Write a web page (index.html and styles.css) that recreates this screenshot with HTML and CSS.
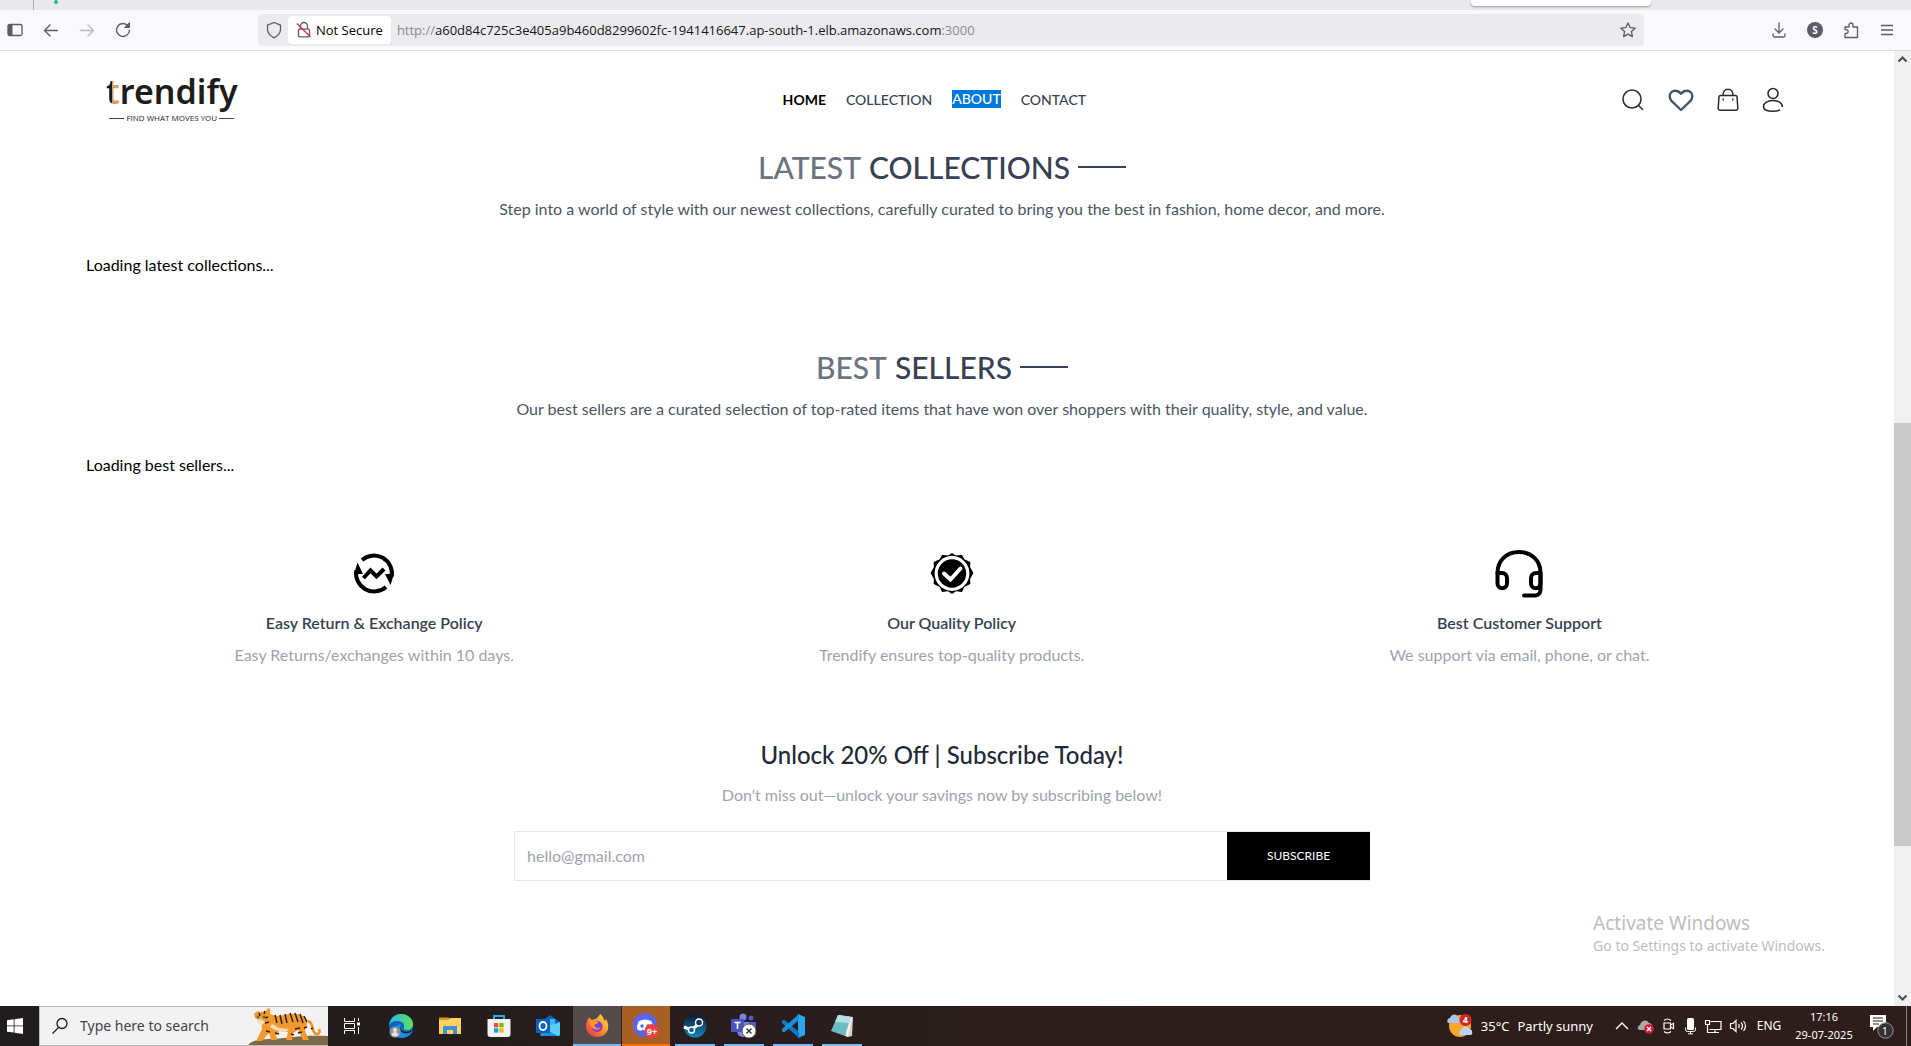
FILE: index.html
```html
<!DOCTYPE html>
<html lang="en">
<head>
<meta charset="utf-8">
<meta name="viewport" content="width=device-width, initial-scale=1">
<title>Trendify</title>
<link rel="stylesheet" href="styles.css">
</head>
<body>
<div class="tab-strip">
  <span class="tab-separator"></span>
  <svg class="tab-favicon" width="6" height="4" viewBox="0 0 6 4" aria-hidden="true"><path d="M2 0h2v1h1v2H4v1H2V3H1V1h1z" fill="#1abc9c"/></svg>
  <span class="tab-tooltip"></span>
</div>

<div class="toolbar">
  <div class="toolbar-nav">
    <button class="tool-button" aria-label="Sidebar"><svg width="18" height="18" viewBox="0 0 18 18"><rect x="2" y="3.5" width="14" height="11" rx="1.5" fill="none" stroke="#5b5b66" stroke-width="1.3"/><path d="M2 3.5h4.5v11H2z" fill="#5b5b66"/></svg></button>
    <button class="tool-button" aria-label="Back"><svg width="18" height="18" viewBox="0 0 18 18" fill="none" stroke="#5b5b66" stroke-width="1.4" stroke-linecap="round" stroke-linejoin="round"><path d="M15.500 9.500H3M8 4 2.500 9.500 8 15"/></svg></button>
    <button class="tool-button" aria-label="Forward"><svg width="18" height="18" viewBox="0 0 18 18" fill="none" stroke="#bcbcc2" stroke-width="1.4" stroke-linecap="round" stroke-linejoin="round"><path d="M2.500 9.500H15M10 4l5.500 5.500L10 15"/></svg></button>
    <button class="tool-button" aria-label="Reload"><svg width="18" height="18" viewBox="0 0 18 18" fill="none" stroke="#5b5b66" stroke-width="1.4" stroke-linecap="round"><path d="M14 4.800A6.500 6.500 0 1 0 15.500 9.200"/><path d="M15.500 2v4.500H11z" fill="#5b5b66" stroke-width="1" stroke-linejoin="round"/></svg></button>
  </div>
  <div class="url-bar">
    <svg class="shield" width="16" height="18" viewBox="0 0 16 18" fill="none" stroke="#5b5b66" stroke-width="1.3" stroke-linejoin="round"><path d="M8 1.500 14.500 4.200V8.500c0 4-3 6.500-6.500 8.300C4.500 15 1.500 12.500 1.500 8.500V4.200z"/></svg>
    <button class="security-chip">
      <svg width="16" height="18" viewBox="0 0 16 18" fill="none"><path d="M4.500 8V5a3.500 3.500 0 0 1 7 0v3M3.500 8.200h9a1 1 0 0 1 1 1v5.600a1 1 0 0 1-1 1h-9a1 1 0 0 1-1-1V9.200a1 1 0 0 1 1-1z" stroke="#5b5b66" stroke-width="1.300"/><path d="M1 2.500 14.500 16" stroke="#e22850" stroke-width="1.300"/></svg>
      <span>Not Secure</span>
    </button>
    <div class="url">http://<span class="url-host">a60d84c725c3e405a9b460d8299602fc-1941416647.ap-south-1.elb.amazonaws.com</span>:3000</div>
    <svg class="star" width="18" height="18" viewBox="0 0 18 18" fill="none" stroke="#5b5b66" stroke-width="1.3" stroke-linejoin="round"><path d="m9 2 2.100 4.600 5 .6-3.700 3.400 1 5L9 13.100l-4.400 2.500 1-5L1.900 7.200l5-.6z"/></svg>
  </div>
  <div class="toolbar-actions">
    <button class="tool-button" aria-label="Downloads"><svg width="18" height="18" viewBox="0 0 18 18" fill="none" stroke="#5b5b66" stroke-width="1.3" stroke-linecap="round" stroke-linejoin="round"><path d="M9 2v9.500M5 8l4 4 4-4M3 13v1.500A1.500 1.500 0 0 0 4.500 16h9a1.500 1.500 0 0 0 1.500-1.500V13"/></svg></button>
    <button class="tool-button" aria-label="Account"><span class="avatar">S</span></button>
    <button class="tool-button" aria-label="Extensions"><svg width="18" height="18" viewBox="0 0 18 18" fill="none" stroke="#5b5b66" stroke-width="1.3" stroke-linejoin="round"><path d="M3 16.500v-4h1.200a1.800 1.800 0 0 0 0-3.800H3V6h4V4a2 2 0 0 1 4 0v2h4.500v10.500z"/></svg></button>
    <button class="tool-button" aria-label="Menu"><svg width="18" height="18" viewBox="0 0 18 18" stroke="#5b5b66" stroke-width="1.300"><path d="M3 4.500h12M3 9h12M3 13.500h12"/></svg></button>
  </div>
</div>

<div class="viewport">
  <div class="page">
    <header class="site-header">
      <a class="logo" href="#">
        <span class="logo-name"><span class="logo-t">t</span>rendify</span>
        <span class="logo-tag">FIND WHAT MOVES YOU</span>
      </a>
      <nav class="site-nav">
        <a class="active" href="#">HOME</a>
        <a href="#">COLLECTION</a>
        <a href="#"><mark>ABOUT</mark></a>
        <a href="#">CONTACT</a>
      </nav>
      <div class="site-actions">
        <button aria-label="Search"><svg width="24" height="26" viewBox="0 0 24 26" fill="none" stroke="#2b2b2b" stroke-width="1.500"><circle cx="11" cy="12" r="9"/><path d="m17.300 18.300 4.700 4.700"/></svg></button>
        <button aria-label="Wishlist"><svg width="26" height="26" viewBox="0 0 26 26" fill="none" stroke="#475569" stroke-width="2.400" stroke-linejoin="round"><path d="M13 23 3.500 13.800A6 6 0 0 1 1.700 9.500C1.700 6 4 3.700 7.200 3.700c2.500 0 4.300 1 5.800 3 1.500-2 3.300-3 5.800-3 3.200 0 5.500 2.300 5.500 5.800a6 6 0 0 1-1.800 4.300z"/></svg></button>
        <button aria-label="Cart"><svg width="22" height="26" viewBox="0 0 22 26" fill="none" stroke="#2b2b2b" stroke-width="1.500"><path d="M3.500 8.500h15a1.500 1.500 0 0 1 1.500 1.300l.8 11.200a2 2 0 0 1-2 2.300H3.200a2 2 0 0 1-2-2.300L2 9.800a1.500 1.500 0 0 1 1.500-1.300z"/><path d="M6 8.500C6 5 8 2.200 11 2.200s5 2.800 5 6.300"/><path d="M5.500 12.500h1.500M15 12.500h1.500" stroke-width="1.800"/></svg></button>
        <button aria-label="Profile"><svg width="22" height="26" viewBox="0 0 22 26" fill="none" stroke="#2b2b2b" stroke-width="1.600" stroke-linecap="round"><circle cx="11" cy="6.500" r="5"/><path d="M20.300 19.500c0-3.500-4-6-9.300-6s-9.500 2.500-9.500 6c0 3 4 4.700 9.500 4.700 2.700 0 5-.4 6.500-1.100"/></svg></button>
      </div>
    </header>

    <main>
      <section class="shelf">
        <h2 class="section-title"><span>LATEST</span> COLLECTIONS</h2>
        <p class="section-text">Step into a world of style with our newest collections, carefully curated to bring you the best in fashion, home decor, and more.</p>
        <p class="loading">Loading latest collections...</p>
      </section>
      <section class="shelf">
        <h2 class="section-title"><span>BEST</span> SELLERS</h2>
        <p class="section-text">Our best sellers are a curated selection of top-rated items that have won over shoppers with their quality, style, and value.</p>
        <p class="loading">Loading best sellers...</p>
      </section>

      <section class="policies">
        <article class="policy">
          <svg width="50" height="50" viewBox="0 0 50 50" fill="none" stroke="#000" stroke-width="4"><path d="M13 11.100A18 18 0 0 1 42.700 27.600M37 37.900A18 18 0 0 1 7.300 21.400"/><path d="m14.500 29 7-7.500 6 6 7.500-7.500"/><path d="M8.500 13.500 14 25H5zM41.500 36 36 25h9z" fill="#000" stroke="none"/></svg>
          <h3>Easy Return &amp; Exchange Policy</h3>
          <p>Easy Returns/exchanges within 10 days.</p>
        </article>
        <article class="policy">
          <svg width="50" height="50" viewBox="0 0 50 50"><path d="M25 4l4 2.500 6-.8 2.300 4.500 6 2.800-.2 5 3.400 6-3.400 6 .2 5-6 3-2.300 5-6-.7-4 2.700-4-2.700-6 .7-2.300-5-6-3 .2-5L3.500 24l3.400-6-.2-5 6-2.800L15 5.700l6 .8z" fill="#000"/><circle cx="25" cy="24.500" r="15.800" fill="none" stroke="#fff" stroke-width="3.200"/><path d="m17 24.500 6.500 6 10-11" fill="none" stroke="#fff" stroke-width="4" stroke-linecap="round"/></svg>
          <h3>Our Quality Policy</h3>
          <p>Trendify ensures top-quality products.</p>
        </article>
        <article class="policy">
          <svg width="50" height="50" viewBox="0 0 50 50" fill="none" stroke="#000" stroke-width="4" stroke-linecap="round" stroke-linejoin="round"><path d="M3.500 24C3.500 11 13 3 25 3s21.500 8 21.500 21v17a5.500 5.500 0 0 1-5.500 5.500H30"/><path d="M3.500 24H8a5 5 0 0 1 5 5v5.500a4.700 4.700 0 0 1-9.500 0zM46.500 24H42a5 5 0 0 0-5 5v5.500a4.700 4.700 0 0 0 9.500 0z"/></svg>
          <h3>Best Customer Support</h3>
          <p>We support via email, phone, or chat.</p>
        </article>
      </section>

      <section class="newsletter">
        <h2>Unlock 20% Off | Subscribe Today!</h2>
        <p>Don't miss out—unlock your savings now by subscribing below!</p>
        <form class="signup">
          <input type="email" aria-label="Email address" placeholder="hello@gmail.com">
          <button type="submit">SUBSCRIBE</button>
        </form>
      </section>
    </main>
    <div class="watermark"><strong>Activate Windows</strong><span>Go to Settings to activate Windows.</span></div>
  </div>
  <div class="scrollbar" aria-hidden="true">
    <svg width="17" height="17" viewBox="0 0 17 17" fill="none" stroke="#505050" stroke-width="2.200"><path d="m4.500 10.500 4-4 4 4"/></svg>
    <div class="scroll-track"><div class="scroll-thumb"></div></div>
    <svg width="17" height="17" viewBox="0 0 17 17" fill="none" stroke="#505050" stroke-width="2.200"><path d="m4.500 6.500 4 4 4-4"/></svg>
  </div>
</div>

<footer class="taskbar">
  <button class="start" aria-label="Start"><svg width="16" height="16" viewBox="0 0 16 16" fill="#fff"><path d="M0 2.300 6.700 1.300v6.200H0zM7.500 1.200 16 0v7.500H7.500zM0 8.300h6.700v6.300L0 13.700zM7.500 8.300H16V16l-8.500-1.200z"/></svg></button>
  <label class="search">
    <svg class="search-glass" width="18" height="18" viewBox="0 0 18 18" fill="none" stroke="#1b1b1b" stroke-width="1.300"><circle cx="11" cy="6.500" r="5"/><path d="M7.500 10.500 1.500 16.500"/></svg>
    <input type="text" aria-label="Search" placeholder="Type here to search">
    <svg class="tiger" width="80" height="38" viewBox="0 0 80 38">
      <path d="M0 38c4-5 12-6 26-6 16-1 26-4 54-3v9z" fill="#7a6847"/>
      <path d="M60 14c5 1 4 8 6 11 2 4 7 2 5-3" fill="none" stroke="#ef9227" stroke-width="2.600"/>
      <path d="M8 5l3-1 1 1 6-1 2-3 2 1v5c6 3 12 2 18 0 9-1 15 0 18 5 3 5-1 9-1 12l4 9h-6l-5-10-5 3-1 7h-6l2-8-9-1-3 4 1 5h-6l-2-7-7 8h-6l6-12-1-8-6-3-1-4z" fill="#f39a2e"/>
      <path d="M24 17l7 4 10 1-3 3-11-2-5-3zM9 13l4-1 4 3-3 3-4-1z" fill="#f7ddba"/>
      <path d="m27 8 2 8m3-8 2 9m3-10 2 9m3-10 3 9m2-9 3 9m2-8 3 9m1-7 3 6M17 4l-1 3m-5-1 1 3m8 1-3 1m4 4-4 1m1 8 4 1m5 1 4 1m16-5 5-1m-2 5 4-1m-11 2 3 1m10-7 3-1m4 2 2-1" fill="none" stroke="#302013" stroke-width="1.500"/>
      <path d="M9 9.500l2 1m4 0 2-1" stroke="#456a62" stroke-width="2"/>
    </svg>
  </label>
  <div class="apps">
    <button class="app" aria-label="Task view"><svg width="18" height="16" viewBox="0 0 18 16" fill="none" stroke="#fff"><path d="M1.500 0v3.500h10V0M1.500 16v-3.500h10V16M1.500 5.500h10v5h-10zM15.500 0v3M15.500 9v7"/><path d="M14 4.500h3v3h-3z" fill="#fff" stroke="none"/></svg></button>
    <button class="app" aria-label="Edge"><svg width="26" height="26" viewBox="0 0 26 26"><defs><linearGradient id="edge" x1="0" x2="1"><stop stop-color="#2bb3ef"/><stop offset="1" stop-color="#5fe05a"/></linearGradient></defs><circle cx="13" cy="13" r="12" fill="#0c66bd"/><path d="M1 12C2 5 7 1 13 1c7 0 12 5 12 10 0 4-3 6-6 6-3 0-4-1-3-3 1-4-3-6-7-6-4 0-7 2-8 4z" fill="url(#edge)"/><path d="M25 18c-3 5-7 7-12 7-5-1-7-6-6-10 1-3 4-4 6-4-2 5 3 9 12 7z" fill="#1a8be0"/><path d="M13 12c-2 5 3 9 12 5l-2 2c-7 4-13-1-10-7z" fill="#231f1e"/><circle cx="7" cy="19" r="5.500" fill="#8f9296"/><circle cx="7" cy="17" r="2" fill="#e4e4e4"/><path d="M3.500 22c1-4 6-4 7 0a5 5 0 0 1-7 0z" fill="#e4e4e4"/></svg></button>
    <button class="app" aria-label="File Explorer"><svg width="24" height="22" viewBox="0 0 24 22"><path d="M1 2.500h10v4H1z" fill="#d99a13"/><path d="M1 5h9l2-2h11v16H1z" fill="#ffd261"/><path d="M5 19v-8h14v8h-4v-4H9v4z" fill="#3f8fd6"/></svg></button>
    <button class="app" aria-label="Microsoft Store"><svg width="24" height="24" viewBox="0 0 24 24"><path d="M7 6V2h10v4" fill="none" stroke="#2fa5e3" stroke-width="2"/><path d="M.5 5h23v15a3 3 0 0 1-3 3h-17a3 3 0 0 1-3-3z" fill="#f2f2f2"/><path d="M7 9h4.300v4.300H7z" fill="#f25022"/><path d="M12.300 9h4.300v4.300h-4.300z" fill="#7fba00"/><path d="M7 14.300h4.300v4.300H7z" fill="#00a4ef"/><path d="M12.300 14.300h4.300v4.300h-4.300z" fill="#ffb900"/></svg></button>
    <button class="app" aria-label="Outlook"><svg width="26" height="24" viewBox="0 0 26 24"><path d="M5 8 15 1l10 7v14H5z" fill="#1160b7"/><path d="M9 5h11v9H9z" fill="#3eb5f1"/><path d="M6 15l19-7v12a2 2 0 0 1-2 2H8a2 2 0 0 1-2-2z" fill="#58d0f5"/><path d="M6 13l17 9H8a2 2 0 0 1-2-2z" fill="#1d8fe0"/><path d="M1 5h14v14H1z" fill="#0f5fb8"/><ellipse cx="8" cy="12" rx="3.500" ry="4" fill="none" stroke="#fff" stroke-width="1.800"/></svg></button>
    <button class="app app-active" aria-label="Firefox"><svg width="24" height="24" viewBox="0 0 24 24"><defs><linearGradient id="fox" x1="1" x2="0" y2="1"><stop stop-color="#ffe847"/><stop offset=".45" stop-color="#ff9328"/><stop offset="1" stop-color="#ee2559"/></linearGradient></defs><path d="M4 3.500 7 6c2-1 4-1 5-2 1-1 2-2 3-4 4 3 3 5 5 7l1-2c6 11-1 18-9 18C3 23-3 13 4 3.500z" fill="url(#fox)"/><circle cx="12" cy="12.500" r="5.500" fill="#7f3ed1"/><path d="M4 8c4-3 6-1 9 0 0 2-3 2-4 3 1 3 4 4 7 2-2 4-10 4-12-5z" fill="#ff9831"/></svg></button>
    <button class="app app-alert" aria-label="Discord"><svg width="26" height="26" viewBox="0 0 26 26"><circle cx="12" cy="12" r="12" fill="#5865f2"/><path d="M6 8c4-2 8-2 12 0 2 3 2.500 6 2 8-2 2-4 2-5 1H9c-1 1-3 1-5-1 0-3 .5-5 2-8z" fill="#fff"/><circle cx="9" cy="13" r="1.700" fill="#5865f2"/><circle cx="15" cy="13" r="1.700" fill="#5865f2"/><circle cx="18.500" cy="18" r="7" fill="#ed4245"/></svg><span class="app-count">9+</span></button>
    <button class="app app-open" aria-label="Steam"><svg width="24" height="24" viewBox="0 0 24 24"><defs><linearGradient id="steam" x1="0" x2="0" y2="1"><stop stop-color="#0c1938"/><stop offset="1" stop-color="#1387b8"/></linearGradient></defs><circle cx="12" cy="12" r="11.500" fill="url(#steam)"/><path d="M1 13l7 3 8-6" fill="none" stroke="#fff" stroke-width="3"/><circle cx="16" cy="8.500" r="3.500" fill="#14365a" stroke="#fff" stroke-width="1.500"/><circle cx="8.500" cy="16" r="3" fill="#1a5d89" stroke="#fff" stroke-width="1.400"/></svg></button>
    <button class="app app-open" aria-label="Teams"><svg width="28" height="26" viewBox="0 0 28 26"><circle cx="13" cy="4" r="3.500" fill="#7b83eb"/><circle cx="21" cy="5" r="2.500" fill="#5059c9"/><path d="M17 9h9v8a5 5 0 0 1-9 0z" fill="#5059c9"/><path d="M7 9h12v9a6 6 0 0 1-12 0z" fill="#7b83eb"/><path d="M1 6h13v13H1z" fill="#4b53bc"/><path d="M4.500 9.500h6M7.500 9.500V16" stroke="#fff" stroke-width="1.600"/><circle cx="19" cy="18" r="7" fill="#fff" stroke="#555" stroke-width="1"/><path d="m16.500 15.500 5 5m0-5-5 5" stroke="#333" stroke-width="1.400"/></svg></button>
    <button class="app app-open" aria-label="Visual Studio Code"><svg width="24" height="24" viewBox="0 0 24 24"><path d="M17 0 24 3v18l-7 3z" fill="#2aa7f2"/><path d="M1 7l2-1.500L18 18v6L1 9z" fill="#0f78c4"/><path d="M1 17l2 1.500L18 6V0L1 15z" fill="#1c8fdb"/></svg></button>
    <button class="app app-open" aria-label="Notepad"><svg width="24" height="24" viewBox="0 0 24 24"><path d="M9 1 23 3l-1 19-4 1z" fill="#d6d2c5"/><path d="M8 1l13 2-6 19-14-5z" fill="#6db9c4"/><path d="M8 1l13 2-2 6L5 8z" fill="#b5e0e4"/><path d="m15 22 6-19 1 1-4 19z" fill="#f4f4ee"/></svg></button>
  </div>
  <div class="tray">
    <button class="weather"><svg width="26" height="24" viewBox="0 0 26 24"><circle cx="13" cy="12" r="11" fill="#f6a62c"/><path d="M1 9a3 3 0 0 1 2-5c2-5 8-4 8 0 3 1 2 5 0 5z" fill="#a9c5f2"/><path d="M13 21a3 3 0 0 1 1-5c2-5 7-4 8-1 4 0 4 5 2 6z" fill="#b9d2f8"/><circle cx="18.500" cy="6" r="6" fill="#cf2722"/></svg><span class="weather-count">4</span><span class="temperature">35°C</span><span>Partly sunny</span></button>
    <div class="tray-icons">
      <svg width="16" height="16" viewBox="0 0 16 16" fill="none" stroke="#fff" stroke-width="1.400"><path d="m2 11 6-6 6 6"/></svg>
      <svg width="18" height="16" viewBox="0 0 18 16"><path d="M3 12C0 12 0 8 3 7c1-5 7-6 9-2 3 0 3 3 3 5l-4 2z" fill="#aaa"/><circle cx="12" cy="11" r="4.800" fill="#d81b32"/><path d="m10 9 4 4m0-4-4 4" stroke="#fff" stroke-width="1.300"/></svg>
      <svg width="14" height="16" viewBox="0 0 14 16" fill="none" stroke="#fff" stroke-width="1.200"><path d="M2 5h6.500v6H2zM8.500 7l3-1.500v5L8.500 9M2 2.500Q5.500-.5 9 2.500M2 13.500q3.500 3 7 0"/></svg>
      <svg width="14" height="18" viewBox="0 0 14 18"><rect x="4" y="1" width="7" height="12" rx="1.500" fill="#fff"/><path d="M2.500 10.500v2q0 2 2 2h6q2 0 2-2v-2M7.500 14.500v2M5 16.800h5" fill="none" stroke="#fff"/></svg>
      <svg width="18" height="16" viewBox="0 0 18 16" fill="none" stroke="#fff" stroke-width="1.200"><path d="M6.500 3.500H17v8H5.500M11 11.500v3M7 14.500h8M1.500 2.500h4v4h-4zM3.500 6.500v8h4"/></svg>
      <svg width="18" height="16" viewBox="0 0 18 16" fill="none" stroke="#fff" stroke-width="1.200"><path d="M1.500 5.500H4L7 2.500v11L4 10.500H1.500zM9.500 6q1.500 2 0 4M12 4.500q3 3.500 0 7M14.500 3q4 5 0 10"/></svg>
    </div>
    <span class="language">ENG</span>
    <div class="clock"><span>17:16</span><span>29-07-2025</span></div>
    <button class="notices" aria-label="Notifications"><svg width="26" height="26" viewBox="0 0 26 26"><path d="M1 2h16v12H8l-4 4v-4H1z" fill="#fff"/><path d="M4 5h10M4 8h10M4 11h6" stroke="#2c1e1c"/><circle cx="16.500" cy="17.500" r="7.700" fill="#333" stroke="#999"/></svg><span class="notice-count">1</span></button>
    <span class="show-desktop"></span>
  </div>
</footer>
</body>
</html>
```
FILE: styles.css
```css
* { box-sizing: border-box; }

body {
  margin: 0;
  min-height: 100vh;
  display: flex;
  flex-direction: column;
  background: #fff;
  color: #000;
  font-family: Lato, "Open Sans", sans-serif;
  font-size: 16px;
  line-height: 24px;
}

h2, h3, p { margin: 0; }
a { color: inherit; text-decoration: none; }
button, input { font: inherit; color: inherit; border: 0; padding: 0; background: none; }
svg { display: block; flex: none; }

/* Browser chrome */
.tab-strip {
  display: flex;
  height: 10px;
  background: #e9e9eb;
}
.tab-separator { width: 34px; border-right: 1px solid #aeaeb2; }
.tab-favicon { margin-left: 19px; }
.tab-tooltip {
  width: 180px;
  height: 6px;
  margin: 0 260px 0 auto;
  background: #fff;
  border-radius: 0 0 4px 4px;
  box-shadow: 0 1px 2px rgba(0, 0, 0, .35);
}

.toolbar {
  display: flex;
  align-items: center;
  height: 41px;
  background: #f9f9fb;
  border-bottom: 1px solid #dcdce0;
  font-family: "Open Sans", "Noto Sans", sans-serif;
  font-size: 13px;
}
.tool-button { display: grid; place-items: center; width: 18px; height: 32px; }
.toolbar-nav { display: flex; gap: 18px; width: 258px; padding-left: 6px; }
.toolbar-actions { display: flex; justify-content: flex-end; gap: 18px; width: 267px; padding-right: 15px; }
.avatar {
  width: 16px;
  height: 16px;
  border-radius: 50%;
  background: #5b5b66;
  color: #fff;
  font-size: 10px;
  font-weight: 700;
  line-height: 16px;
  text-align: center;
}
.url-bar {
  flex: 1;
  display: flex;
  align-items: center;
  height: 32px;
  padding: 0 7px 0 8px;
  background: #ebebed;
  border-radius: 4px;
}
.security-chip {
  display: flex;
  align-items: center;
  gap: 4px;
  height: 28px;
  margin: 0 6px;
  padding: 0 8px;
  background: #fff;
  border-radius: 4px;
}
.url { flex: 1; color: #8a8a8e; }
.url-host { color: #15141a; }

/* Page viewport */
.viewport { flex: 1; display: flex; }
.page { position: relative; flex: 1; padding: 0 96px 0 86px; }
.scrollbar { display: flex; flex-direction: column; width: 17px; background: #f0f0f0; }
.scroll-track { flex: 1; display: grid; grid-template-rows: 355fr 423fr 143fr; }
.scroll-thumb { grid-row: 2; background: #c9c9c9; }

.site-header {
  display: flex;
  align-items: center;
  justify-content: space-between;
  height: 98px;
  padding: 0 14px 0 20px;
}
.logo { display: flex; flex-direction: column; align-items: center; gap: 2px; color: #1d1d1b; }
.logo-name {
  font-family: "Noto Sans", sans-serif;
  font-size: 34px;
  font-weight: 600;
  line-height: 34px;
}
.logo-t {
  background: linear-gradient(90deg, #1d1d1b 0 45%, #cf9f6c 45%);
  background-clip: text;
  color: transparent;
}
.logo-tag {
  display: flex;
  align-items: center;
  gap: 2px;
  font-family: "Open Sans", sans-serif;
  font-size: 8px;
  line-height: 16px;
}
.logo-tag::before, .logo-tag::after { content: ""; width: 15px; border-top: 1px solid #444; }
.site-nav { display: flex; gap: 20px; margin-left: 10px; color: #374151; font-size: 14px; font-weight: 500; line-height: 20px; }
.site-nav .active { color: #000; font-weight: 700; }
.site-nav mark { display: block; background: #0078d7; color: #fff; line-height: 18px; }
.site-actions { display: flex; align-items: center; gap: 23px; }

.shelf { height: 200px; }
.section-title {
  display: flex;
  align-items: center;
  justify-content: center;
  gap: 8px;
  color: #374151;
  font-size: 30px;
  font-weight: 500;
  line-height: 36px;
}
.section-title span { color: #6b7280; }
.section-title::after { content: ""; width: 48px; height: 2px; background: #374151; }
.section-text { margin-top: 12px; color: #4b5563; text-align: center; }
.loading { margin-top: 32px; }

.policies { display: flex; gap: 8px; justify-content: space-around; color: #374151; text-align: center; }
.policy svg { margin: 0 auto 12px; }
.policy h3 { font-size: 16px; font-weight: 600; line-height: 24px; }
.policy p { margin-top: 8px; color: #9ca3af; }

.newsletter { margin-top: 72px; text-align: center; }
.newsletter h2 { color: #1f2937; font-size: 24px; font-weight: 500; line-height: 32px; }
.newsletter p { margin-top: 12px; color: #9ca3af; }
.signup { display: flex; width: 50%; margin: 24px auto; border: 1px solid #e5e7eb; border-right: 0; }
.signup input { flex: 1; min-width: 0; padding: 0 12px; outline: 0; }
.signup input::placeholder { color: #9ca3af; opacity: 1; }
.signup button { width: 143px; height: 48px; background: #000; color: #fff; font-size: 12px; }

.watermark {
  position: absolute;
  right: 69px;
  bottom: 50px;
  display: flex;
  flex-direction: column;
  color: #bdbdbd;
  font-family: "Noto Sans", sans-serif;
  font-size: 14px;
  line-height: 20px;
}
.watermark strong { font-size: 19px; font-weight: 400; line-height: 26px; }

/* Windows taskbar */
.taskbar {
  display: flex;
  height: 40px;
  background: linear-gradient(90deg, #1f1d1d, #2d1e1c 60%);
  color: #fff;
  font-family: "Noto Sans", sans-serif;
  font-size: 13px;
  line-height: 18px;
}
.start { width: 39px; padding-left: 7px; }
.search {
  display: flex;
  align-items: center;
  width: 289px;
  padding-left: 11px;
  background: #f2f2f2;
  border: 1px solid #bdbdbd;
  border-right: 0;
  font-size: 14px;
}
.search input { flex: 1; min-width: 0; padding-left: 11px; color: #333; outline: 0; }
.search input::placeholder { color: #444; opacity: 1; }
.apps { display: flex; gap: 1px; }
.app { position: relative; display: grid; place-items: center; width: 48px; height: 40px; border-bottom: 2px solid transparent; border-top: 2px solid transparent; }
.app-active { background: #534c4a; border-color: #534c4a #534c4a #76b9ed; }
.app-alert { background: #a85f26; border-color: #a85f26 #a85f26 #ff7300; }
.app-open::after { content: ""; position: absolute; left: 4px; right: 4px; bottom: -2px; height: 2px; background: #76b9ed; }
.app-count { position: absolute; left: 23px; top: 15px; width: 14px; font-size: 9px; font-weight: 700; line-height: 18px; text-align: center; }
.tray { display: flex; align-items: center; margin-left: auto; padding-right: 4px; }
.weather { position: relative; display: flex; align-items: center; gap: 8px; }
.weather-count { position: absolute; left: 16px; top: -2px; font-size: 9px; font-weight: 700; line-height: 16px; }
.tray-icons { display: flex; align-items: center; gap: 7px; margin-left: 21px; }
.language { width: 44px; font-size: 12px; text-align: center; }
.clock { display: flex; flex-direction: column; width: 66px; font-size: 11px; text-align: center; }
.notices { position: relative; margin-left: 12px; }
.notice-count { position: absolute; left: 13px; top: 9px; font-size: 10px; }
.show-desktop { width: 1px; height: 40px; margin-left: 11px; background: #8a817f; }
```
